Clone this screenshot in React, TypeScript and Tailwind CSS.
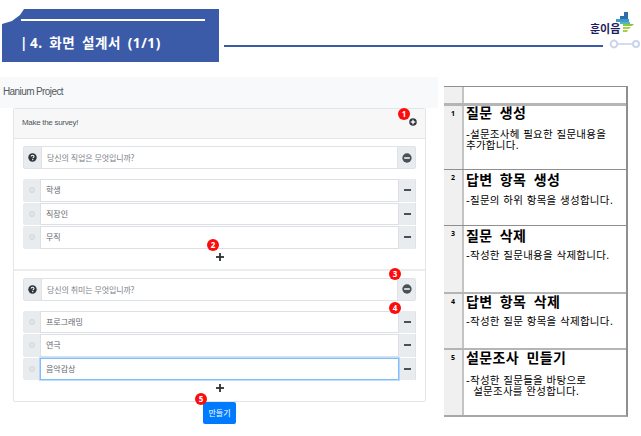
import React from "react";

const KR = "font-['Noto_Sans','Noto_Sans_CJK_KR',sans-serif]";

function Badge({ n, className }: { n: number; className: string }) {
  return (
    <span className={`absolute z-10 flex h-[12px] w-[12px] items-center justify-center rounded-full bg-[#fb0d0d] text-[8px] font-bold leading-none text-white ${className}`}>
      {n}
    </span>
  );
}

function CircleIcon({ kind, size = 11 }: { kind: "plus" | "minus" | "q"; size?: number }) {
  return (
    <svg width={size} height={size} viewBox="0 0 12 12" className="shrink-0">
      <circle cx="6" cy="6" r="5.6" fill={kind === "minus" ? "#495057" : "#2f363c"} />
      {kind === "minus" && <rect x="2.6" y="5" width="6.8" height="2" fill="#e9ecef" />}
      {kind === "plus" && (
        <>
          <rect x="2.6" y="5" width="6.8" height="2" fill="#fff" />
          <rect x="5" y="2.6" width="2" height="6.8" fill="#fff" />
        </>
      )}
      {kind === "q" && (
        <>
          <path d="M4.2 4.6c0-2.2 3.8-2.2 3.8 0 0 1.3-1.6 1.3-1.6 2.5" fill="none" stroke="#fff" strokeWidth="1.4" />
          <rect x="5.5" y="8.1" width="1.6" height="1.5" fill="#fff" />
        </>
      )}
    </svg>
  );
}

function Question({ text }: { text: string }) {
  return (
    <div className="mx-[9px] flex h-[23px] rounded-[2px] border border-[#dfe3e7] bg-white">
      <div className="flex w-[18px] items-center justify-center border-r border-[#dfe3e7] bg-[#e9ecef]">
        <CircleIcon kind="q" size={9} />
      </div>
      <div className="flex-1 pl-[5px] text-[8px] leading-[21px] tracking-[-0.1px] text-[#7c8288]">{text}</div>
      <div className="flex w-[18px] items-center justify-center border-l border-[#dfe3e7] bg-[#e9ecef]">
        <CircleIcon kind="minus" size={10} />
      </div>
    </div>
  );
}

function Option({ text, focus }: { text: string; focus?: boolean }) {
  return (
    <div className="mb-px flex h-[22.5px] rounded-[2px] bg-[#e9ecef]">
      <div className="flex w-[17px] items-center justify-center">
        <span className="h-[6px] w-[6px] rounded-full border border-[#d3d7da] bg-[#e3e6e9]" />
      </div>
      <div
        className={`flex-1 bg-white pl-[5px] text-[8px] leading-[20px] text-[#5f666c] ${
          focus
            ? "border border-[#80bdff] shadow-[0_0_0_1px_rgba(128,189,255,0.5)]"
            : "border border-[#dcdfe3]"
        }`}
      >
        {text}
      </div>
      <div className="flex w-[17px] items-center justify-center border-r border-[#dfe3e7]">
        <span className="h-[2px] w-[7px] bg-[#495057]" />
      </div>
    </div>
  );
}

function Plus() {
  return (
    <div className="flex h-[14px] items-center justify-center">
      <svg width="8" height="8" viewBox="0 0 8 8">
        <rect x="0" y="3.1" width="8" height="1.8" fill="#2b3136" />
        <rect x="3.1" y="0" width="1.8" height="8" fill="#2b3136" />
      </svg>
    </div>
  );
}

const rows = [
  { n: 1, h: 66, t: "질문 생성", ho: "-mt-[2px]", go: "mt-[7px]", d: ["-설문조사헤 필요한 질문내용을", "추가합니다."], b: "border-t-[3px] border-t-[#b5b5b5]" },
  { n: 2, h: 56, t: "답변 항목 생성", ho: "mt-[1px]", go: "mt-[6px]", d: ["-질문의 하위 항목을 생성합니다."], b: "border-t border-t-[#8f8f8f]" },
  { n: 3, h: 67, t: "질문 삭제", ho: "mt-[1px]", go: "mt-[5px]", d: ["-작성한 질문내용을 삭제합니다."], b: "border-t border-t-[#8f8f8f]" },
  { n: 4, h: 56, t: "답변 항목 삭제", ho: "-mt-[1px]", go: "mt-[5px]", d: ["-작성한 질문 항목을 삭제합니다."], b: "border-t-2 border-t-[#b5b5b5]" },
  { n: 5, h: 67, t: "설문조사 민들기", ho: "-mt-[1px]", go: "mt-[8px]", d: ["-작성한 질문들을 바탕으로", "\u00a0\u00a0설문조사를 완성합니다."], b: "border-t-2 border-t-[#b5b5b5]" },
];

function Logo() {
  return (
    <div className="relative h-[50px] w-[54px]">
      <span className="absolute left-[3px] top-[19px] text-[11px] font-bold leading-[14px] text-[#1b1b5e]">훈이음</span>
      <svg width="20" height="22" viewBox="0 0 20 22" className="absolute left-[28px] top-[9px]">
        <path d="M9 0h4v4h-4zM5 4h8v3H5z" fill="#2f6fa8" />
        <path d="M1 7h13v3H1z" fill="#3d9cc9" />
        <path d="M5 10h10v2H5z" fill="#50b8c0" />
        <path d="M8 12h11l-2 2H8z" fill="#8cc63f" />
        <path d="M8 15h8l-2 2H8zM8 18h5l-1 2H8z" fill="#a9cf46" />
      </svg>
      <svg width="32" height="10" viewBox="0 0 32 10" className="absolute left-[22px] top-[36px]">
        <circle cx="5" cy="5" r="3.4" fill="none" stroke="#ccd4ec" strokeWidth="2" />
        <rect x="8" y="4.2" width="15" height="1.6" fill="#ccd4ec" />
        <circle cx="27" cy="5" r="3" fill="none" stroke="#ccd4ec" strokeWidth="2" />
      </svg>
    </div>
  );
}

export default function App() {
  return (
    <div className={`relative h-[436px] w-[641px] overflow-hidden bg-white ${KR}`}>
      {/* Slide header */}
      <div className="flex h-[77px] items-start pl-[2px] pt-[9px]">
        <div className="relative h-[53px] w-[217px] bg-[#3b5ba9] pl-[19px] pt-[10px] [clip-path:polygon(22px_0,100%_0,100%_100%,0_100%,0_15px,10px_12px,18px_6px)]">
          <div className="h-[2px] w-[184px] bg-white" />
          <div className="mt-[13px] -ml-[1px] flex whitespace-nowrap text-[13.5px] font-bold leading-[18px] tracking-[0.6px] text-white [word-spacing:2.5px]">
            <span className="w-[10px]">|</span>
            <span>4. 화면 설계서 (1/1)</span>
          </div>
        </div>
        <div className="ml-[5px] mt-[36px] h-[2px] w-[379px] bg-[#3b5ba9]" />
        <div className="-ml-[16px] -mt-[6px]">
          <Logo />
        </div>
      </div>

      <div className="flex items-start">
        {/* Embedded web app */}
        <div className="w-[438px]">
          <div className="h-[31px] bg-[#f8f9fa] pl-[3px] font-['Liberation_Sans',sans-serif] text-[10px] leading-[30px] tracking-[-0.6px] text-[#555b60]">Hanium Project</div>
          <div className="relative mx-[13px] h-[294px] w-[413px] rounded-[2px] border border-[#e4e5e6] bg-white">
            <div className="relative h-[30px] border-b border-[#e4e5e6] bg-[#f7f7f7] pl-[8px] font-['Liberation_Sans',sans-serif] text-[8px] leading-[28px] tracking-[-0.3px] text-[#50565b]">
              Make the survey!
              <span className="absolute right-[8px] top-[9px]">
                <CircleIcon kind="plus" size={8} />
              </span>
            </div>
            <Badge n={1} className="right-[15px] top-[-1px]" />

            <div className="pt-[7px]">
              <Question text="당신의 직업은 무엇입니까?" />
              <div className="mx-[9px] mt-[10px]">
                <Option text="학생" />
                <Option text="직장인" />
                <Option text="무직" />
              </div>
              <Plus />
            </div>
            <Badge n={2} className="left-[193px] top-[130px]" />

            <div className="mt-[5px] border-t-2 border-[#eceded] pt-[7px]">
              <Question text="당신의 취미는 무엇입니까?" />
              <div className="mx-[9px] mt-[10px]">
                <Option text="프로그래밍" />
                <Option text="연극" />
                <Option text="음악감상" focus />
              </div>
              <Plus />
            </div>
            <Badge n={3} className="right-[24px] top-[159px]" />
            <Badge n={4} className="right-[24px] top-[193px]" />
          </div>
          <div className="relative flex justify-center pl-[1px]">
            <button className="h-[22px] w-[33px] rounded-[2px] bg-[#007bff] text-[8px] text-white">만들기</button>
            <Badge n={5} className="left-[195px] top-[-9px]" />
          </div>
        </div>

        {/* Description table */}
        <div className="ml-[6px] mt-[9px] w-[184px] border-b-2 border-r-2 border-t border-[#8f8f8f] border-b-[#a8a8a8]">
          <div className="flex h-[16px]">
            <div className="w-[20px] border-r-2 border-[#c4c4c4] bg-[#f0f0f0]" />
            <div className="flex-1" />
          </div>
          {rows.map((r) => (
            <div key={r.n} className={`flex ${r.b}`} style={{ height: r.h }}>
              <div className="w-[20px] border-r-2 border-[#c4c4c4] bg-[#f0f0f0] pl-[7px] pt-[3px] text-[7px] font-bold leading-[9px] text-black">
                {r.n}
              </div>
              <div className="flex-1 pl-[2px] font-['DejaVu_Sans','Noto_Sans_CJK_KR',sans-serif] text-black">
                <div className={`${r.ho} text-[14px] font-bold leading-[18px] tracking-[0.4px] [word-spacing:2px]`}>{r.t}</div>
                <div className={`${r.go} text-[10.5px] leading-[11px] tracking-[0.25px]`}>
                  {r.d.map((l) => (
                    <div key={l} className="whitespace-nowrap">{l}</div>
                  ))}
                </div>
              </div>
            </div>
          ))}
        </div>
      </div>
    </div>
  );
}
